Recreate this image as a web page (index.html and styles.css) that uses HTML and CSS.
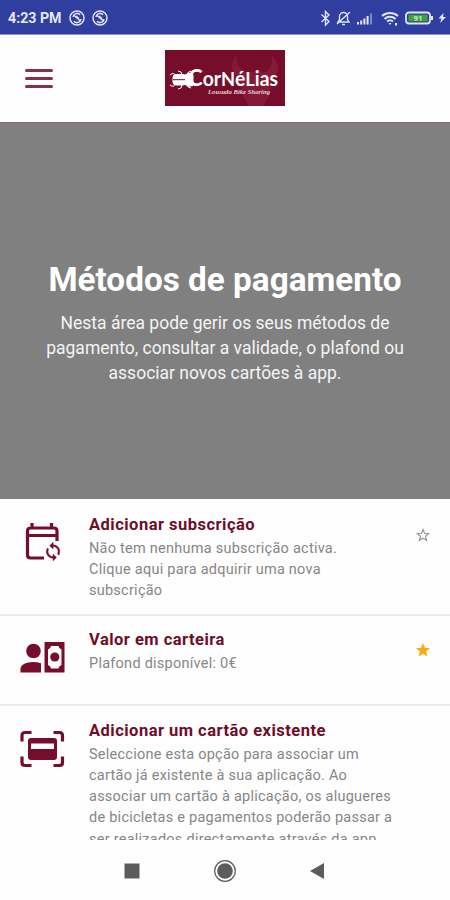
FILE: index.html
```html
<!DOCTYPE html>
<html lang="pt">
<head>
<meta charset="utf-8">
<title>Métodos de pagamento</title>
<link rel="stylesheet" href="styles.css">
</head>
<body>
<div class="screen">
  <div class="status">
    <span class="clock">4:23 PM</span>
    <svg class="app" viewBox="0 0 16 16"><circle cx="8" cy="8" r="7"/><path d="M12 9A4 4 0 0 1 5 11.200M4 7A4 4 0 0 1 11 4.800M4.500 5l7 6M7 6l3 2.500"/></svg>
    <svg class="app" viewBox="0 0 16 16"><circle cx="8" cy="8" r="7"/><path d="M12 9A4 4 0 0 1 5 11.200M4 7A4 4 0 0 1 11 4.800M4.500 5l7 6M7 6l3 2.500"/></svg>
    <svg class="signals" viewBox="0 0 128 18">
      <g class="line">
        <path d="M1.500 5.500l7.500 7-3.500 3.500V2.500L9 6l-7.500 7"/>
        <path d="M18 13h11l-1.500-2.500V7.500a4 4 0 0 0-8 0v3zM22 15.500h3M17 15L30 3"/>
        <path class="wifi" d="M62 7a12 12 0 0 1 16 0M64.500 10a8 8 0 0 1 11 0M67 12.600a4.500 4.500 0 0 1 6 0"/>
        <rect class="cell" x="86" y="3.500" width="24" height="11" rx="3"/>
      </g>
      <g class="solid">
        <path d="M37 13h2v2.500h-2zM40.200 11.500h2v4h-2zM43.400 9.500h2v6h-2zM46.600 7h2v8.500h-2zM68.500 14h3L70 16zM75 14h2v2.500h-2zM111 7h2v4h-2zM123.500 4l-5 5.500h3L120 14l6-6h-3z"/>
        <path class="dim" d="M50 4.500h2v11h-2z"/>
      </g>
      <rect class="charge" x="88.500" y="5.700" width="19" height="6.600"/>
      <text class="level" x="98" y="12">91</text>
    </svg>
  </div>

  <header class="header">
    <div class="menu"><i></i><i></i><i></i></div>
    <svg class="logo" viewBox="0 0 120 56">
      <rect class="logo-bg" width="120" height="56"/>
      <path class="horns" d="M71 5c-6 9-5 17 2 23l5 18 6 10h14l6-10 4-18c7-6 7-13-1-23 0 9-1 13-6 17H80c-7-4-8-9-9-17z"/>
      <g class="beetle">
        <rect x="8" y="24.500" width="13" height="10.500" rx="3"/><path class="body" d="M20 25q4-3 8-.5v11q-4 2-8-1z"/>
        <path d="M10 25q-1-3-5 0M10 34q-1 4-5 1M17 25q0-4-4-4M17 35q0 4-4 4M22 25q0-3 4-4M22 34q0 4 4 4"/>
      </g>
      <path class="wing" d="M8 29.700h12"/>
      <text class="brand" x="23" y="35.500" textLength="90" lengthAdjust="spacingAndGlyphs"><tspan class="cap">C</tspan>or<tspan class="small">N</tspan>é<tspan class="small">L</tspan>ias</text>
      <text class="tagline" x="43" y="43.500" textLength="62" lengthAdjust="spacingAndGlyphs">Lousada Bike Sharing</text>
    </svg>
  </header>

  <section class="hero">
    <h1>Métodos de pagamento</h1>
    <p>Nesta área pode gerir os seus métodos de<br>pagamento, consultar a validade, o plafond ou<br>associar novos cartões à app.</p>
  </section>

  <main class="list">
    <article class="item first">
      <svg class="icon" viewBox="0 0 48 48">
        <path class="stroke" d="M26 38H12.500Q9.500 38 9.500 35V11Q9.500 8 12.500 8H36Q39 8 39 11V21M9.500 15.500H39M14 8V3M33.500 8V3"/>
        <path class="sync" transform="translate(25 21.500) scale(.84)" d="M12 4V1L8 5l4 4V6c3.310 0 6 2.690 6 6 0 1.010-.250 1.970-.700 2.800l1.460 1.460C19.540 15.030 20 13.570 20 12c0-4.420-3.580-8-8-8zm0 14c-3.310 0-6-2.690-6-6 0-1.010.250-1.970.700-2.800L5.240 7.740C4.460 8.970 4 10.430 4 12c0 4.420 3.580 8 8 8v3l4-4-4-4v3z"/>
      </svg>
      <div class="copy"><h2>Adicionar subscrição</h2><p>Não tem nenhuma subscrição activa.<br>Clique aqui para adquirir uma nova<br>subscrição</p></div>
      <svg class="star" viewBox="0 0 24 24"><path d="M12 2.500l2.700 6.600 7.100.500-5.500 4.500 1.800 7-6.100-3.900-6.100 3.900 1.800-7-5.500-4.500 7.100-.500z"/></svg>
    </article>
    <article class="item second">
      <svg class="icon" viewBox="0 0 48 48">
        <circle class="fill" cx="15.500" cy="16" r="7.300"/>
        <path class="fill" d="M2.500 37.500V33Q4 27.500 15 27q4 0 8 1.300v9.200z"/>
        <path class="fill" fill-rule="evenodd" d="M26.500 7h20v30.500h-20zM33 11q-.500 3-3 3.500v15.500q2.500.500 3 3.500h7.500q.500-3 3-3.500V14.500q-2.500-.500-3-3.500z"/>
        <circle class="fill" cx="36.800" cy="22" r="4.600"/>
      </svg>
      <div class="copy"><h2>Valor em carteira</h2><p>Plafond disponível: 0€</p></div>
      <svg class="star gold" viewBox="0 0 24 24"><path d="M12 2.500l2.700 6.600 7.100.500-5.500 4.500 1.800 7-6.100-3.900-6.100 3.900 1.800-7-5.500-4.500 7.100-.500z"/></svg>
    </article>
    <article class="item third">
      <svg class="icon" viewBox="0 0 48 48">
        <path class="stroke" d="M4 15.500V9.500Q4 6.500 7 6.500H13.500M35.500 6.500h6q3 0 3 3V15.500M4 30.500v6q0 3 3 3H13.500M35.500 39.500h6q3 0 3-3V30.500"/>
        <path class="fill" fill-rule="evenodd" d="M13 12h23q3 0 3 3v16q0 3-3 3H13q-3 0-3-3V15q0-3 3-3zM13 17.500v5.500h23v-5.500z"/>
      </svg>
      <div class="copy"><h2>Adicionar um cartão existente</h2><p>Seleccione esta opção para associar um<br>cartão já existente à sua aplicação. Ao<br>associar um cartão à aplicação, os alugueres<br>de bicicletas e pagamentos poderão passar a<br>ser realizados directamente através da app.</p></div>
    </article>
  </main>

  <nav class="nav">
    <svg viewBox="0 0 24 24"><rect x="4.500" y="4.500" width="15" height="15"/></svg>
    <svg viewBox="0 0 24 24"><circle cx="12" cy="12" r="7.800"/><circle class="ring" cx="12" cy="12" r="10.300"/></svg>
    <svg viewBox="0 0 24 24"><path d="M4 12L18 4v16z"/></svg>
  </nav>
</div>
</body>
</html>
```

FILE: styles.css
```css
* { box-sizing: border-box; margin: 0; }
body { font-family: Roboto, "Liberation Sans", sans-serif; background: #fff; }
.screen { width: 450px; height: 900px; display: flex; flex-direction: column; overflow: hidden; background: #fefefe; }
.status { height: 35px; flex: none; background: #303f9f; border-bottom: 1px solid #8c94c8; display: flex; align-items: center; padding: 1px 2px 0 8px; color: #e6e8f6; }
.clock { font-size: 14.2px; font-weight: 700; width: 61px; white-space: nowrap; }
.app { width: 16px; height: 16px; margin-right: 7px; fill: none; stroke: #e0e3f5; stroke-width: 1.5; }
.signals { width: 128px; height: 18px; margin-left: auto; }
.line { fill: none; stroke: #dfe3f7; stroke-width: 1.4; }
.wifi { stroke-width: 2; }
.cell { stroke-width: 1.8; }
.solid { fill: #e6e8f6; }
.dim { fill: #7c88cb; }
.charge { fill: #3fa53b; }
.level { font-size: 8px; font-weight: 700; fill: #c9efc6; text-anchor: middle; }
.header { height: 88px; flex: none; border-bottom: 1px solid #8d6872; display: flex; align-items: flex-start; padding: 15px 0 0 25px; }
.menu { width: 28px; margin-top: 19px; display: grid; gap: 4px; }
.menu i { height: 3px; border-radius: 1.5px; background: #833248; }
.menu i + i { margin-top: 1px; }
.logo { width: 120px; height: 56px; margin-left: 112px; }
.logo-bg { fill: #760d2a; }
.horns { fill: #841a38; }
.beetle { fill: #fff; stroke: #fff; stroke-width: 1; }
.beetle path { fill: none; }
.beetle .body { fill: #fff; }
.wing { stroke: #760d2a; stroke-width: 1; }
.brand { font: 700 20px Lato, sans-serif; fill: #fff; }
.cap { font-size: 23px; }
.small { font-size: 19px; }
.tagline { font: italic 700 6px "Liberation Serif", serif; fill: #e9cdd5; }
.hero { height: 376px; flex: none; background: #808080; color: #fff; text-align: center; padding-top: 137px; }
.hero h1 { font-size: 33.3px; line-height: 40px; font-weight: 700; white-space: nowrap; }
.hero p { font-size: 17.5px; line-height: 25px; margin-top: 11px; color: #f4f4f4; white-space: nowrap; }
.list { flex: 1; overflow: hidden; }
.item { display: flex; align-items: flex-start; padding: 0 17px 0 18px; border-bottom: 2px solid #ebebeb; }
.first { height: 117px; padding-top: 15px; }
.second { height: 90px; padding-top: 13px; }
.third { height: 150px; padding-top: 14px; }
.icon { width: 48px; height: 48px; flex: none; margin-top: 6px; margin-right: 23px; }
.fill, .sync { fill: #760d2a; }
.sync { stroke: #760d2a; stroke-width: .6; }
.stroke { fill: none; stroke: #760d2a; stroke-width: 3.2; }
.copy { flex: 1; white-space: nowrap; }
.copy h2 { font-size: 16.5px; line-height: 22px; font-weight: 700; letter-spacing: .48px; color: #700c28; }
.copy p { font-size: 14.5px; line-height: 21.3px; letter-spacing: .25px; color: #868686; margin-top: 1.6px; }
.star { width: 14px; height: 14px; flex: none; margin-top: 14px; margin-right: 3px; fill: none; stroke: #8b8b8b; stroke-width: 1.8; }
.gold { fill: #faa80d; stroke: #faa80d; }
.nav { height: 60px; flex: none; display: flex; justify-content: center; align-items: center; gap: 69px; padding-top: 2px; background: #fefefe; }
.nav svg { width: 24px; height: 24px; fill: #5c5c5c; }
.nav .ring { fill: none; stroke: #5c5c5c; stroke-width: 1.2; }
```
